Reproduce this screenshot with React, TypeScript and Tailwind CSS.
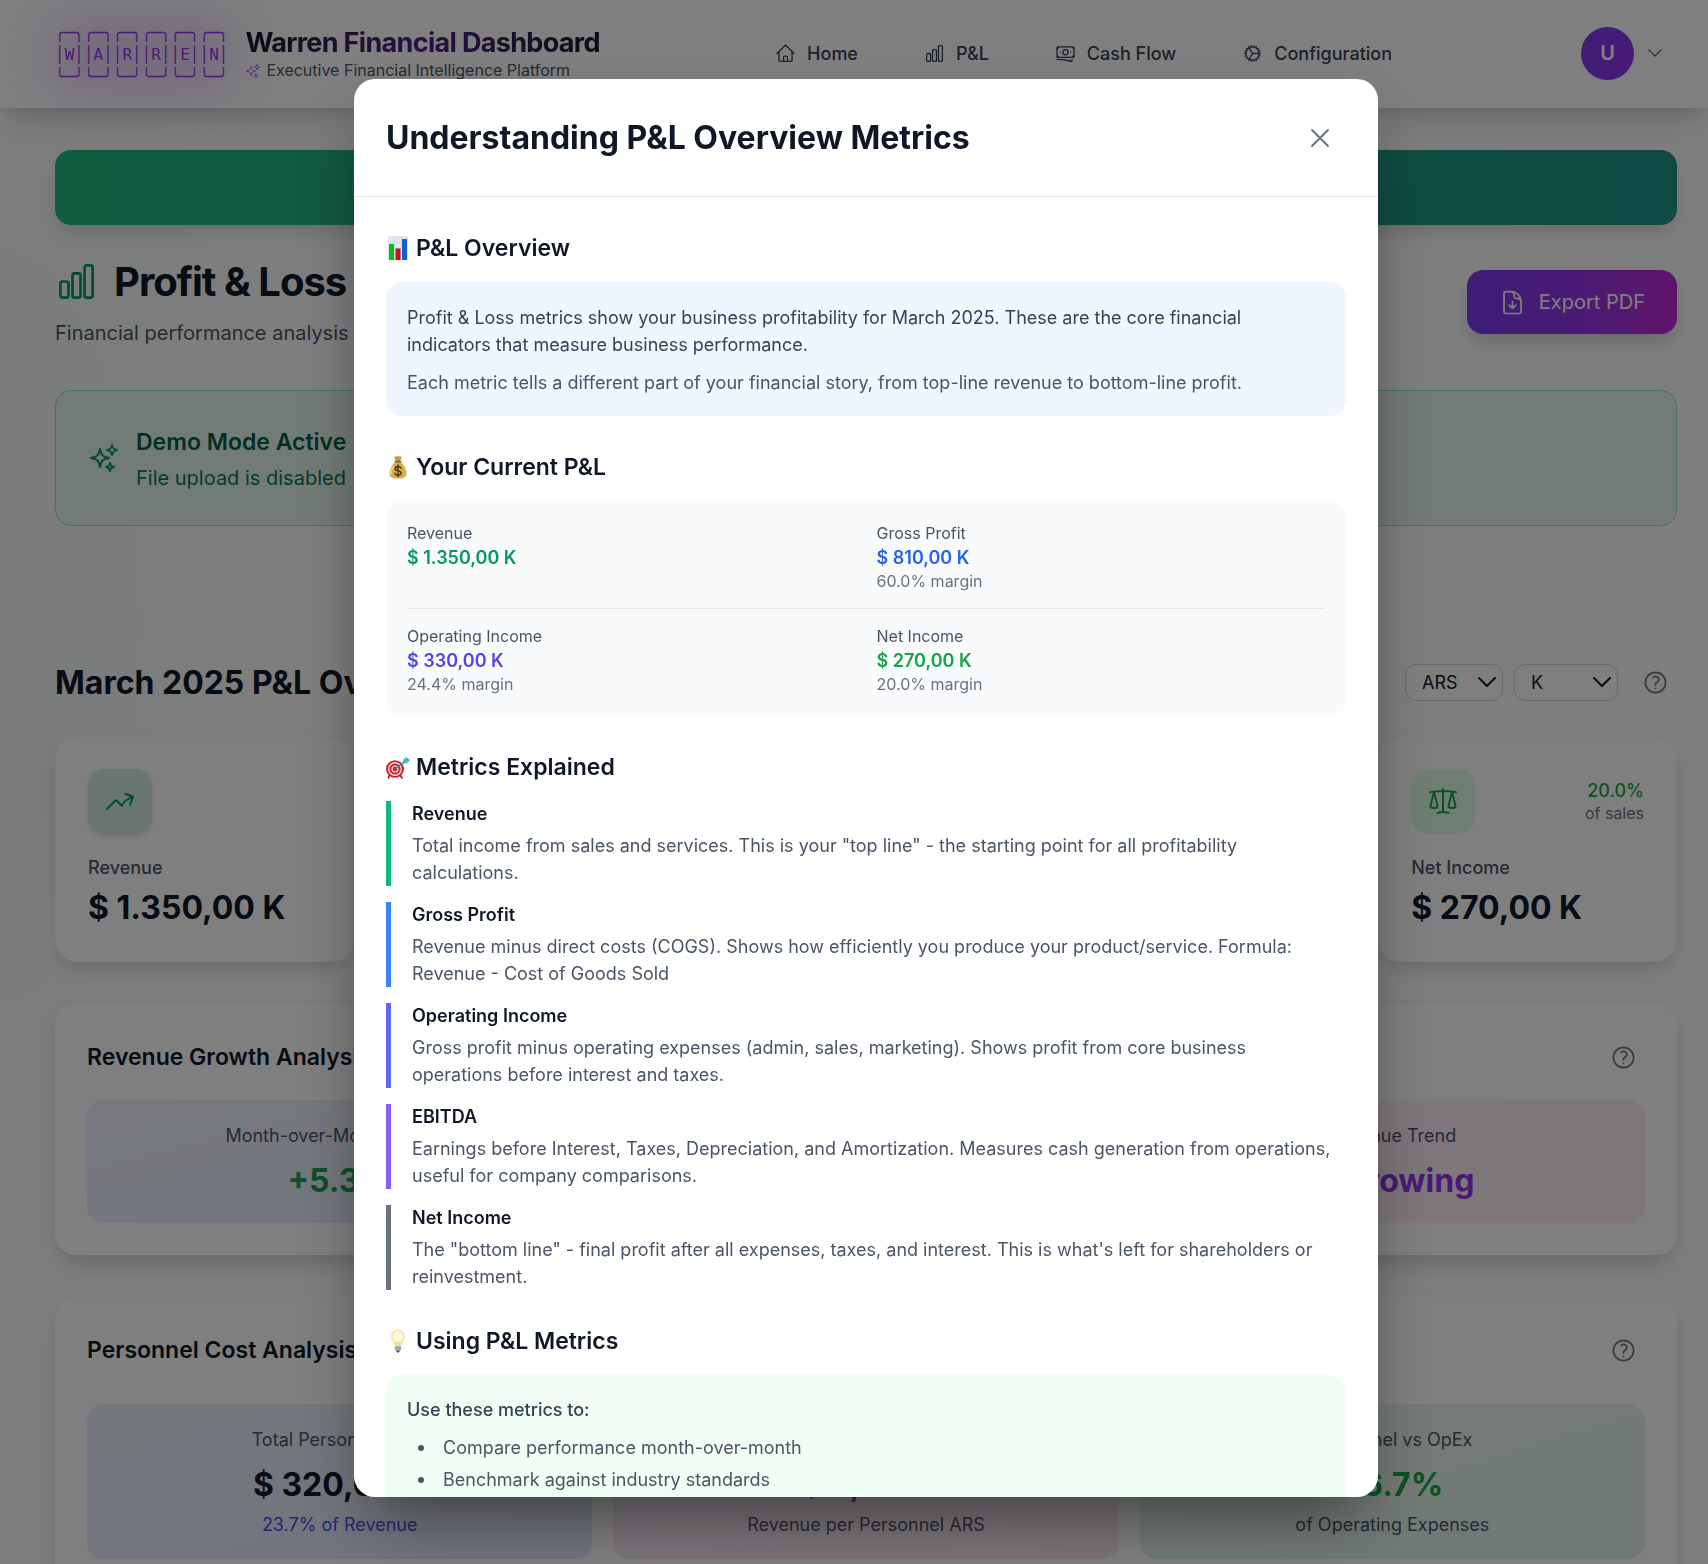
import React from "react";
import {
  HiOutlineHome,
  HiOutlineChartBar,
  HiOutlineBanknotes,
  HiOutlineCog,
  HiOutlineSparkles,
  HiOutlineChevronDown,
  HiOutlineDocumentArrowDown,
  HiOutlineArrowTrendingUp,
  HiOutlineScale,
  HiOutlineQuestionMarkCircle,
  HiOutlineXMark,
} from "react-icons/hi2";

const LOGO = [
  "╭─╮╭─╮╭─╮╭─╮╭─╮╭─╮",
  "│W││A││R││R││E││N│",
  "╰─╯╰─╯╰─╯╰─╯╰─╯╰─╯",
].join("\n");

const NAV = [
  { label: "Home", Icon: HiOutlineHome },
  { label: "P&L", Icon: HiOutlineChartBar },
  { label: "Cash Flow", Icon: HiOutlineBanknotes },
  { label: "Configuration", Icon: HiOutlineCog },
];

function Header() {
  return (
    <header className="relative z-10 flex h-[108px] items-center bg-white pr-[43px] pb-0.5 pl-[55px] shadow-[0_20px_34px_-6px_rgba(0,0,0,0.13),0_8px_14px_-6px_rgba(0,0,0,0.12)]">
      <div className="flex items-center pt-[3px]">
        <div className="relative mr-[17px]">
          <div className="absolute -inset-1 rounded-2xl bg-[#9333ea]/20 blur-xl" />
          <pre className="relative font-['DejaVu_Sans_Mono',monospace] text-[16px] leading-[22px] text-[#9333ea]">{LOGO}</pre>
        </div>
        <div>
          <div className="bg-gradient-to-r from-gray-900 via-[#581c87] to-gray-900 bg-clip-text text-[27px] leading-8 font-bold tracking-tight text-transparent">
            Warren Financial Dashboard
          </div>
          <p className="flex items-center gap-[5px] text-[16px] leading-[23px] text-gray-600">
            <HiOutlineSparkles className="size-4 text-[#a855f7]" />
            Executive Financial Intelligence Platform
          </p>
        </div>
      </div>
      <nav className="ml-auto flex gap-[66px] text-[18px] leading-[27px] font-medium text-gray-700">
        {NAV.map(({ label, Icon }) => (
          <a key={label} href="#" className="flex items-center gap-[11px]">
            <Icon className="size-[21px]" />
            {label}
          </a>
        ))}
      </nav>
      <button type="button" aria-label="Account" className="ml-[189px] flex items-center gap-[11px]">
        <span className="flex size-[53px] items-center justify-center rounded-full bg-gradient-to-br from-[#7c3aed] to-[#9333ea] text-[20px] font-semibold text-white">
          U
        </span>
        <HiOutlineChevronDown className="size-5 text-gray-600" />
      </button>
    </header>
  );
}

function Help() {
  return (
    <button type="button" aria-label="Help" className="p-2 text-gray-500">
      <HiOutlineQuestionMarkCircle className="size-[27px]" />
    </button>
  );
}

function UnitSelect({ label, options, width }: { label: string; options: string[]; width: string }) {
  return (
    <div className={"relative " + width}>
      <select aria-label={label} className="h-[37px] w-full appearance-none rounded-[11px] border border-gray-300 bg-white pl-4 text-[18px] text-gray-900">
        {options.map((o) => (
          <option key={o}>{o}</option>
        ))}
      </select>
      <svg viewBox="0 0 18 10" fill="none" stroke="currentColor" strokeWidth="2" strokeLinecap="round" strokeLinejoin="round" className="pointer-events-none absolute top-[13px] right-[7px] h-[10px] w-[18px] text-gray-900">
        <path d="M1 1l8 8 8-8" />
      </svg>
    </div>
  );
}

type Metric = { label: string; value: string; pct?: string; box: string; Icon: React.ComponentType<{ className?: string }>; pctColor?: string };

const METRICS: Metric[] = [
  { label: "Revenue", value: "$ 1.350,00 K", box: "bg-[#d5ece5] text-[#059669] shadow-md", Icon: HiOutlineArrowTrendingUp },
  { label: "Gross Profit", value: "$ 810,00 K", pct: "60.0%", box: "bg-blue-100 text-[#2563eb]", Icon: HiOutlineChartBar, pctColor: "text-[#2563eb]" },
  { label: "Operating Income", value: "$ 330,00 K", pct: "24.4%", box: "bg-indigo-100 text-[#4f46e5]", Icon: HiOutlineCog, pctColor: "text-[#4f46e5]" },
  { label: "EBITDA", value: "$ 360,00 K", pct: "26.7%", box: "bg-purple-100 text-[#9333ea]", Icon: HiOutlineBanknotes, pctColor: "text-[#9333ea]" },
  { label: "Net Income", value: "$ 270,00 K", pct: "20.0%", box: "bg-[#dcfce7] text-[#16a34a]", Icon: HiOutlineScale, pctColor: "text-[#16a34a]" },
];

function MetricCard({ m }: { m: Metric }) {
  return (
    <article className="rounded-[21px] border border-gray-100 bg-white p-8 shadow-[0_10px_20px_-4px_rgba(0,0,0,0.16)]">
      <div className="flex h-16 items-center justify-between">
        <span className={"flex size-16 items-center justify-center rounded-2xl " + m.box}>
          <m.Icon className="size-8" />
        </span>
        {m.pct && (
          <span className="text-right">
            <span className={"block text-[18px] leading-[25px] font-medium " + m.pctColor}>{m.pct}</span>
            <span className="block text-[16px] leading-[21px] text-gray-500">of sales</span>
          </span>
        )}
      </div>
      <h3 className="mt-[21px] text-[18px] leading-[27px] font-medium text-gray-600">{m.label}</h3>
      <p className="mt-[5px] text-[32px] leading-[43px] font-bold whitespace-nowrap text-gray-900">{m.value}</p>
    </article>
  );
}

type Stat = { label: string; value: string; valueColor: string; bg: string; note?: string; noteColor?: string };

const GROWTH: Stat[] = [
  { label: "Month-over-Month Growth", value: "+5.3%", valueColor: "text-[#16a34a]", bg: "from-[#eef2fb] to-[#e3eafc]" },
  { label: "Year-over-Year Growth", value: "+12.5%", valueColor: "text-[#16a34a]", bg: "from-[#effbf4] to-[#e2f7ee]" },
  { label: "Revenue Trend", value: "↗ Growing", valueColor: "text-[#9333ea]", bg: "from-[#faf0fb] to-[#fbeef4]" },
];

const PERSONNEL: Stat[] = [
  { label: "Total Personnel Cost", value: "$ 320,00 K", valueColor: "text-gray-900", bg: "from-[#e9eff8] to-[#e3e9fb]", note: "23.7% of Revenue", noteColor: "text-[#4f46e5]" },
  { label: "Personnel Efficiency", value: "$ 4,22 K", valueColor: "text-[#9333ea]", bg: "from-[#f6eefb] to-[#f8e8f1]", note: "Revenue per Personnel ARS", noteColor: "text-gray-600" },
  { label: "Personnel vs OpEx", value: "66.7%", valueColor: "text-[#16a34a]", bg: "from-[#ecf8f0] to-[#e0f2ec]", note: "of Operating Expenses", noteColor: "text-gray-600" },
];

function StatPanel({ title, stats, header }: { title: string; stats: Stat[]; header: string }) {
  return (
    <section className="rounded-[21px] bg-white p-8 shadow-[0_14px_26px_-6px_rgba(0,0,0,0.18),0_0_12px_rgba(0,0,0,0.04)]">
      <div className={"flex items-center justify-between " + header}>
        <h2 className="text-[23px] leading-[37px] font-semibold text-gray-900">{title}</h2>
        <Help />
      </div>
      <div className="grid grid-cols-3 gap-[21px]">
        {stats.map((s) => (
          <div key={s.label} className={"rounded-2xl bg-gradient-to-br px-[21px] pt-[22px] pb-[21px] text-center " + s.bg}>
            <p className="text-[18px] leading-[27px] text-gray-600">{s.label}</p>
            <p className={"mt-[10px] text-[32px] leading-[43px] font-bold " + s.valueColor}>{s.value}</p>
            {s.note && <p className={"mt-[5px] text-[18px] leading-[27px] " + s.noteColor}>{s.note}</p>}
          </div>
        ))}
      </div>
    </section>
  );
}

function Dashboard() {
  return (
    <main className="pt-[42px] pr-[31px] pl-[55px]">
      <div className="h-[75px] rounded-2xl bg-gradient-to-r from-[#22bb80] to-[#1e9488] shadow-[0_10px_20px_-4px_rgba(0,0,0,0.16)]" />

      <div className="mt-[30px] flex items-center justify-between">
        <div>
          <h1 className="flex items-center gap-4 text-[40px] leading-[53px] font-bold tracking-tight text-gray-900">
            <HiOutlineChartBar className="size-[43px] text-[#059669]" />
            Profit &amp; Loss Dashboard
          </h1>
          <p className="mt-[9px] text-[20px] leading-8 text-gray-600">Financial performance analysis and insights</p>
        </div>
        <button type="button" className="flex h-16 items-center gap-[13px] rounded-2xl bg-gradient-to-r from-[#7c3aed] via-[#9333ea] to-[#c026d3] px-8 text-[20px] text-white shadow-[0_10px_20px_-4px_rgba(0,0,0,0.2)]">
          <HiOutlineDocumentArrowDown className="size-[27px]" />
          Export PDF
        </button>
      </div>

      <div className="mt-[41px] flex h-[136px] items-center gap-4 rounded-2xl border border-[#86e5bf] bg-[#e7f7ee] px-8">
        <HiOutlineSparkles className="size-8 text-[#059669]" />
        <div className="pt-1">
          <h2 className="text-[23px] leading-8 font-semibold text-[#065f46]">Demo Mode Active</h2>
          <p className="mt-1 text-[20px] leading-8 text-[#047857]">File upload is disabled</p>
        </div>
      </div>

      <div className="mt-[135px] flex items-center justify-between">
        <h2 className="text-[32px] leading-[43px] font-bold text-gray-900">March 2025 P&amp;L Overview</h2>
        <div className="flex items-center gap-[11px]">
          <UnitSelect label="Currency" options={["ARS", "USD"]} width="w-[98px]" />
          <UnitSelect label="Units" options={["K", "M"]} width="mr-[5px] w-[104px]" />
          <Help />
        </div>
      </div>

      <div className="mt-8 grid grid-cols-5 gap-8">
        {METRICS.map((m) => (
          <MetricCard key={m.label} m={m} />
        ))}
      </div>

      <div className="mt-[42px] flex flex-col gap-[42px]">
        <StatPanel title="Revenue Growth Analysis" stats={GROWTH} header="mb-[21px]" />
        <StatPanel title="Personnel Cost Analysis" stats={PERSONNEL} header="mb-8" />
      </div>
    </main>
  );
}

function ChartEmoji() {
  return (
    <svg viewBox="0 0 24 24" className="size-6">
      <rect x="2" y="0" width="20" height="24" fill="#dfe7f0" />
      <path d="M2 6h20M2 12h20M2 18h20M8.500 0v24M15 0v24" stroke="#c9d5e2" strokeWidth="0.6" />
      <rect x="3" y="8" width="5" height="16" fill="#0bbf12" />
      <rect x="9.500" y="12.500" width="5" height="11.500" fill="#c5101c" />
      <rect x="16" y="3" width="5" height="21" fill="#1260cf" />
    </svg>
  );
}

function BagEmoji() {
  return (
    <svg viewBox="0 0 24 24" className="size-6">
      <path d="M8 1.500c1.500.8 2.500-.9 4-.2 1.500-.7 2.500 1 4 .2l-2 5h-4z" fill="#c79a3a" />
      <path d="M9.500 7h5c4 3 6 7.500 6 11.500 0 3.500-2 5-8.500 5s-8.500-1.500-8.500-5C3.500 14.500 5.500 10 9.500 7z" fill="#d9ae45" />
      <path d="M7 12c-1.500 2-2.300 4.500-2 7" fill="none" stroke="#f3d98a" strokeWidth="1.500" strokeLinecap="round" />
      <rect x="8.500" y="5.800" width="7" height="1.800" rx="0.900" fill="#8a6420" />
      <path d="M15 13.200c-.5-1.200-1.600-1.700-3-1.700-1.700 0-2.900.8-2.900 2.200 0 3 6 1.400 6 4.300 0 1.400-1.300 2.200-3.100 2.200-1.600 0-2.800-.7-3.200-2M12 10v11.700" fill="none" stroke="#3d3426" strokeWidth="1.400" strokeLinecap="round" />
    </svg>
  );
}

function TargetEmoji() {
  return (
    <svg viewBox="0 0 24 24" className="size-6 overflow-visible">
      <path d="M3.500 20l-1 3M14.500 20.500l1.500 2.500" stroke="#a1161e" strokeWidth="1.600" strokeLinecap="round" />
      <ellipse cx="9" cy="14" rx="9" ry="8.800" fill="#cf2029" />
      <circle cx="9" cy="14" r="6.900" fill="#f3e6e6" />
      <circle cx="9" cy="14" r="5.600" fill="#cf2029" />
      <circle cx="9" cy="14" r="3.600" fill="#f3e6e6" />
      <circle cx="9" cy="14" r="2.400" fill="#cf2029" />
      <path d="M9 14L19 6.500" stroke="#3f8790" strokeWidth="1.500" />
      <path d="M16.500 8.500l.5-4L21 1.500l.7 2.600 2.900.6-3.400 3.800z" fill="#5cc6d2" />
      <path d="M17 8l5.500-4.500" stroke="#1f7f90" strokeWidth="0.900" />
    </svg>
  );
}

function BulbEmoji() {
  return (
    <svg viewBox="0 0 24 24" className="size-6">
      <path d="M12 .5c4.200 0 7 3 7 6.800 0 3.700-3 5.300-3.500 9.700h-7C8 12.600 5 11 5 7.300 5 3.500 7.800.5 12 .5z" fill="#fbe3a0" />
      <ellipse cx="12" cy="7.500" rx="5" ry="5.400" fill="#fffae6" />
      <path d="M10.700 16.500l-.6-5M13.300 16.500l.6-5" stroke="#ecca7c" strokeWidth="0.600" />
      <rect x="8.900" y="17" width="6.200" height="4.600" rx="1" fill="#b4b6ba" />
      <path d="M8.900 18.600h6.200M8.900 20.200h6.200" stroke="#85888e" strokeWidth="0.600" />
      <path d="M10 21.600h4l-1 2h-2z" fill="#4b4e53" />
    </svg>
  );
}

function SectionTitle({ emoji, children }: { emoji: React.ReactNode; children: React.ReactNode }) {
  return (
    <h3 className="mb-[15px] flex items-center gap-[6px] text-[23px] leading-[38px] font-semibold text-gray-900">
      {emoji}
      {children}
    </h3>
  );
}

function Figure({ label, value, color, margin }: { label: string; value: string; color: string; margin?: string }) {
  return (
    <div>
      <p className="text-[16px] leading-[22px] text-gray-600">{label}</p>
      <p className={"text-[18px] leading-[27px] font-semibold " + color}>{value}</p>
      {margin && <p className="text-[16px] leading-[21px] text-gray-500">{margin}</p>}
    </div>
  );
}

const EXPLAINED = [
  { name: "Revenue", bar: "border-[#10b981]", text: 'Total income from sales and services. This is your "top line" - the starting point for all profitability calculations.' },
  { name: "Gross Profit", bar: "border-[#3b82f6]", text: "Revenue minus direct costs (COGS). Shows how efficiently you produce your product/service. Formula: Revenue - Cost of Goods Sold" },
  { name: "Operating Income", bar: "border-[#6366f1]", text: "Gross profit minus operating expenses (admin, sales, marketing). Shows profit from core business operations before interest and taxes." },
  { name: "EBITDA", bar: "border-[#8b5cf6]", text: "Earnings before Interest, Taxes, Depreciation, and Amortization. Measures cash generation from operations, useful for company comparisons." },
  { name: "Net Income", bar: "border-[#6b7280]", text: "The \"bottom line\" - final profit after all expenses, taxes, and interest. This is what's left for shareholders or reinvestment." },
];

const USES = ["Compare performance month-over-month", "Benchmark against industry standards", "Identify trends in profitability"];

function MetricsModal() {
  return (
    <div className="fixed inset-0 z-20 flex justify-center bg-black/50 pt-[79px] pb-[67px] pl-6">
      <div role="dialog" aria-modal="true" aria-labelledby="modal-title" className="flex w-full max-w-5xl flex-col overflow-hidden rounded-[21px] bg-white shadow-[0_33px_67px_-16px_rgba(0,0,0,0.5)]">
        <div className="flex shrink-0 items-center justify-between border-b border-gray-200 p-8">
          <h2 id="modal-title" className="text-[32px] leading-[43px] font-bold text-gray-900">
            Understanding P&amp;L Overview Metrics
          </h2>
          <button type="button" aria-label="Close" className="flex size-[53px] items-center justify-center text-gray-500">
            <HiOutlineXMark className="size-8" />
          </button>
        </div>
        <div className="flex min-h-0 flex-1 flex-col gap-8 overflow-hidden p-8 text-[18px] leading-[27px] text-gray-600">
          <section>
            <SectionTitle emoji={<ChartEmoji />}>P&amp;L Overview</SectionTitle>
            <div className="rounded-2xl bg-blue-50 px-[21px] pt-[22px] pb-5">
              <p className="text-gray-700">
                Profit &amp; Loss metrics show your business profitability for March 2025. These are the core financial indicators that measure business performance.
              </p>
              <p className="mt-[11px]">Each metric tells a different part of your financial story, from top-line revenue to bottom-line profit.</p>
            </div>
          </section>

          <section>
            <SectionTitle emoji={<BagEmoji />}>Your Current P&amp;L</SectionTitle>
            <div className="rounded-2xl bg-gray-50 p-[21px]">
              <div className="grid grid-cols-2 gap-[21px]">
                <Figure label="Revenue" value="$ 1.350,00 K" color="text-[#059669]" />
                <Figure label="Gross Profit" value="$ 810,00 K" color="text-[#2563eb]" margin="60.0% margin" />
              </div>
              <div className="mt-4 grid grid-cols-2 gap-[21px] border-t border-gray-200 pt-4">
                <Figure label="Operating Income" value="$ 330,00 K" color="text-[#4f46e5]" margin="24.4% margin" />
                <Figure label="Net Income" value="$ 270,00 K" color="text-[#16a34a]" margin="20.0% margin" />
              </div>
            </div>
          </section>

          <section>
            <SectionTitle emoji={<TargetEmoji />}>Metrics Explained</SectionTitle>
            <div className="flex flex-col gap-4">
              {EXPLAINED.map((e) => (
                <div key={e.name} className={"border-l-[5px] pr-3 pl-[21px] " + e.bar}>
                  <h4 className="leading-[26px] font-semibold text-gray-900">{e.name}</h4>
                  <p className="mt-[5px]">{e.text}</p>
                </div>
              ))}
            </div>
          </section>

          <section>
            <SectionTitle emoji={<BulbEmoji />}>Using P&amp;L Metrics</SectionTitle>
            <div className="rounded-2xl bg-green-50 p-[21px]">
              <p className="font-medium text-gray-700">Use these metrics to:</p>
              <ul className="mt-[11px] flex flex-col gap-[5px] pl-[11px]">
                {USES.map((use) => (
                  <li key={use} className="flex items-center gap-[19px] before:size-[6px] before:rounded-full before:bg-gray-600">
                    {use}
                  </li>
                ))}
              </ul>
            </div>
          </section>
        </div>
      </div>
    </div>
  );
}

export default function App() {
  return (
    <div className="h-screen overflow-hidden bg-[radial-gradient(ellipse_260px_700px_at_0%_40%,#f1f7f4,#fdfdfd)] font-[Inter,'Liberation_Sans',sans-serif]">
      <Header />
      <Dashboard />
      <MetricsModal />
    </div>
  );
}
